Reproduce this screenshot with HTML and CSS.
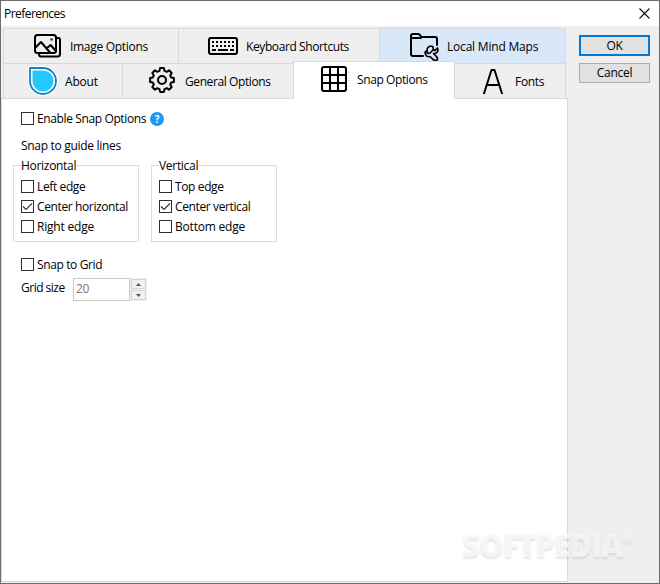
FILE: index.html
```html
<!DOCTYPE html>
<html lang="en">
<head>
<meta charset="utf-8">
<title>Preferences</title>
<link rel="stylesheet" href="styles.css">
</head>
<body>
<div class="window">
  <header class="titlebar">
    <span class="title">Preferences</span>
    <svg class="close" width="11" height="11" viewBox="0 0 11 11"><path d="M.5.5l10 10M10.5.5l-10 10"/></svg>
  </header>
  <div class="body">
    <main class="main">
      <nav class="tabs">
        <div class="row">
          <div class="tab images">
            <svg class="icon" width="30" height="26" viewBox="0 0 30 26"><rect x="2" y="2" width="21" height="18" rx="2.5"/><path d="M24 5h1.500q1.500 0 1.500 2v14q0 2.500-2.500 2.500H8Q6 23.500 6 21M2.500 14.500L8 9l9 10.500M13.500 15.500L17.500 12l5.500 6"/><path class="fill" d="M17.500 5.500h2v2h-2z"/></svg>
            <span>Image Options</span>
          </div>
          <div class="tab keyboard">
            <svg class="icon" width="30" height="18" viewBox="0 0 30 18"><rect x="1" y="1" width="28" height="16" rx="2"/><path class="keys" d="M4 5h22M4 9h22"/><path class="bars" d="M4 13h4M10 13h10M22 13h4"/></svg>
            <span>Keyboard Shortcuts</span>
          </div>
          <div class="tab maps">
            <svg class="icon" width="30" height="28" viewBox="0 0 30 28"><path d="M13 23H3q-2 0-2-2V3q0-2 2-2h5q2 0 3 3h14q2 0 2 2v6M1.500 5H11"/><path class="wrench" d="M22.500 13.500q-3-1-4.500 1-1.300 1.500-.7 3.500M15.500 18.500q-1 2.500 1 4.300 1.700 1.400 3.500.7l3.500 3.300q1.800 1.200 3.500.2 1.200-1.500-.3-3.200L23.500 20.500M15.500 18.500l3 2 1.500-.5 3.500-3.500-.8-3M27.500 15l-2.500 2.500-1.500-.500M27.500 15q1.500 4.500-3 5.500"/></svg>
            <span>Local Mind Maps</span>
          </div>
        </div>
        <div class="row second">
          <div class="tab about">
            <svg class="icon" width="30" height="30" viewBox="0 0 30 30"><path class="halo" d="M1 1h14a14 14 0 1 1-14 14z"/><path class="ring" d="M2 2h13a13 13 0 1 1-13 13z"/><path class="drop" d="M4.500 4.500H15A10.500 10.500 0 1 1 4.500 15z"/></svg>
            <span>About</span>
          </div>
          <div class="tab general">
            <svg class="icon" width="26" height="26" viewBox="0 0 26 26"><circle cx="13" cy="13" r="4"/><path d="M24.900 11.100V14.900L22.200 15.500L21.200 17.750L22.700 20.050L20.050 22.700L17.750 21.200L15.500 22.200L14.900 24.900H11.100L10.500 22.200L8.250 21.200L5.950 22.700L3.300 20.050L4.800 17.750L3.800 15.500L1.100 14.900V11.100L3.800 10.500L4.800 8.250L3.300 5.950L5.950 3.300L8.250 4.800L10.500 3.800L11.100 1.100H14.900L15.500 3.800L17.750 4.800L20.050 3.300L22.700 5.950L21.200 8.250L22.200 10.500z"/></svg>
            <span>General Options</span>
          </div>
          <div class="tab snap active">
            <svg class="icon" width="26" height="26" viewBox="0 0 26 26"><rect x="1" y="1" width="24" height="24" rx="2"/><path d="M9 1v24M17 1v24M1 9h24M1 17h24"/></svg>
            <span>Snap Options</span>
          </div>
          <div class="tab fonts">
            <svg class="icon" width="20" height="25" viewBox="0 0 20 25"><path d="M1 24.500L8.500 1h3L19 24.500M4.200 16h11.600"/></svg>
            <span>Fonts</span>
          </div>
        </div>
      </nav>
      <section class="panel">
        <div class="check enable"><i class="box"></i><span>Enable Snap Options</span><b class="help">?</b></div>
        <div class="guide">Snap to guide lines</div>
        <div class="groups">
          <div class="group">
            <div class="legend">Horizontal</div>
            <div class="check"><i class="box"></i><span>Left edge</span></div>
            <div class="check"><i class="box"><svg width="11" height="11" viewBox="0 0 11 11"><path d="M1 5.500L4 8.500L10 2.300"/></svg></i><span>Center horizontal</span></div>
            <div class="check"><i class="box"></i><span class="loose">Right edge</span></div>
          </div>
          <div class="group">
            <div class="legend">Vertical</div>
            <div class="check"><i class="box"></i><span>Top edge</span></div>
            <div class="check"><i class="box"><svg width="11" height="11" viewBox="0 0 11 11"><path d="M1 5.500L4 8.500L10 2.300"/></svg></i><span>Center vertical</span></div>
            <div class="check"><i class="box"></i><span class="loose">Bottom edge</span></div>
          </div>
        </div>
        <div class="check grid-check"><i class="box"></i><span>Snap to Grid</span></div>
        <div class="size">
          <span class="size-label">Grid size</span>
          <div class="field">20</div>
          <div class="spin">
            <i><svg width="5" height="3" viewBox="0 0 5 3"><path d="M0 3L2.500 0L5 3z"/></svg></i>
            <i><svg width="5" height="3" viewBox="0 0 5 3"><path d="M0 0L2.500 3L5 0z"/></svg></i>
          </div>
        </div>
      </section>
    </main>
    <aside class="side">
      <div class="button primary">OK</div>
      <div class="button">Cancel</div>
    </aside>
  </div>
  <div class="watermark">SOFTPEDIA<sup>®</sup></div>
</div>
</body>
</html>
```
FILE: styles.css
```css
* { box-sizing: border-box; }
body { margin: 0; font: 12px/16px "Open Sans", "Noto Sans", sans-serif; letter-spacing: -0.3px; color: #000; }
.window { position: relative; width: 660px; height: 584px; border: 1px solid #6d6d6f; background: #efefef; display: flex; flex-direction: column; overflow: hidden; }
.titlebar { height: 25px; flex: none; background: #fff; display: flex; justify-content: space-between; align-items: center; padding: 0 9px 0 3px; }
.title { letter-spacing: -0.55px; }
.close { fill: none; stroke: #111; stroke-width: 1.1; }
.body { display: flex; flex: 1; min-height: 0; }
.main { width: 567px; display: flex; flex-direction: column; padding-bottom: 1px; }
.tabs { padding: 2px 0 0 2px; height: 72px; flex: none; }
.row { display: flex; width: 563px; height: 35px; border-top: 1px solid #d9d9d9; }
.tab { display: flex; align-items: center; border-left: 1px solid #d9d9d9; white-space: nowrap; }
.tab span { padding-top: 2px; }
.tab:last-child { border-right: 1px solid #d9d9d9; }
.icon { flex: none; fill: none; stroke: #000; stroke-width: 2; stroke-linejoin: round; stroke-linecap: round; }
.icon .fill { fill: #000; stroke: none; }
.images { width: 175px; padding-left: 29px; gap: 7px; }
.keyboard { width: 201px; padding-left: 29px; gap: 8px; letter-spacing: -0.4px; }
.keys { stroke-dasharray: 2 2; stroke-linecap: butt; }
.bars { stroke-linecap: butt; }
.maps { width: 187px; padding-left: 30px; gap: 7px; background: #d8e8f8; letter-spacing: -0.2px; }
.maps .icon { position: relative; top: 1px; }
.wrench { stroke-width: 1.7; }
.about { width: 119px; padding-left: 24px; gap: 7px; letter-spacing: -0.2px; }
.halo { fill: #fff; stroke: #fff; }
.ring { fill: #fff; stroke: #1380c3; stroke-width: 1.8; }
.drop { fill: #25c7ff; stroke: none; }
.general { width: 171px; padding-left: 26px; gap: 10px; letter-spacing: -0.4px; }
.general .icon { position: relative; top: -1px; }
.second .tab { height: 34px; }
.second .snap { width: 162px; height: 38px; margin-top: -3px; border: 1px solid #d9d9d9; border-bottom: 0; background: #fff; padding-left: 27px; padding-bottom: 4px; gap: 10px; position: relative; letter-spacing: -0.4px; }
.fonts { width: 111px; padding-left: 28px; gap: 12px; }
.second .fonts { border-left: 0; }
.panel { flex: 1; background: #fff; border: 1px solid #d9d9d9; padding: 12px 11px; }
.check { display: flex; align-items: center; height: 20px; letter-spacing: -0.38px; }
.check .loose { letter-spacing: -0.2px; }
.box { width: 13px; height: 13px; border: 1px solid #303030; margin: 0 3px 1px 0; flex: none; background: #fff; display: block; }
.box svg { display: block; fill: none; stroke: #333; stroke-width: 1.2; }
.enable { height: 16px; padding-left: 8px; }
.help { width: 14px; height: 14px; border-radius: 50%; background: #2196f3; color: #fff; text-align: center; font-size: 10px; line-height: 14px; letter-spacing: 0; margin-left: 4px; }
.guide { margin: 11px 0 0 8px; }
.groups { display: flex; gap: 12px; margin-top: 11px; }
.group { width: 126px; height: 77px; border: 1px solid #dcdcdc; padding-left: 7px; }
.legend { display: block; width: max-content; height: 14px; line-height: 14px; margin: -7px 0 4px; background: #fff; }
.grid-check { margin-top: 13px; padding-left: 8px; }
.size { display: flex; margin: 3px 0 0 8px; }
.size-label { width: 52px; padding-top: 2px; letter-spacing: -0.5px; }
.field { width: 57px; height: 23px; border: 1px solid #c8c8c8; color: #787878; padding: 2px; }
.spin { width: 17px; height: 23px; background: #f0f0f0; padding: 1px; display: flex; flex-direction: column; gap: 1px; }
.spin i { flex: 1; border: 1px solid #d5d5d5; display: flex; align-items: center; justify-content: center; }
.spin svg { fill: #555; }
.side { padding: 9px 0 0 11px; display: flex; flex-direction: column; gap: 7px; }
.button { width: 71px; height: 20px; border: 1px solid #adadad; background: #e1e1e1; text-align: center; line-height: 18px; }
.primary { height: 21px; border: 2px solid #0078d7; line-height: 17px; }
.watermark { position: absolute; left: 461px; top: 526px; font: 800 31px/36px "Open Sans", sans-serif; letter-spacing: -1.1px; color: rgba(250,250,250,.75); text-shadow: 0 2px 2px rgba(0,0,0,.1); }
.watermark sup { font-size: 11px; line-height: 1; vertical-align: 14px; }
```
